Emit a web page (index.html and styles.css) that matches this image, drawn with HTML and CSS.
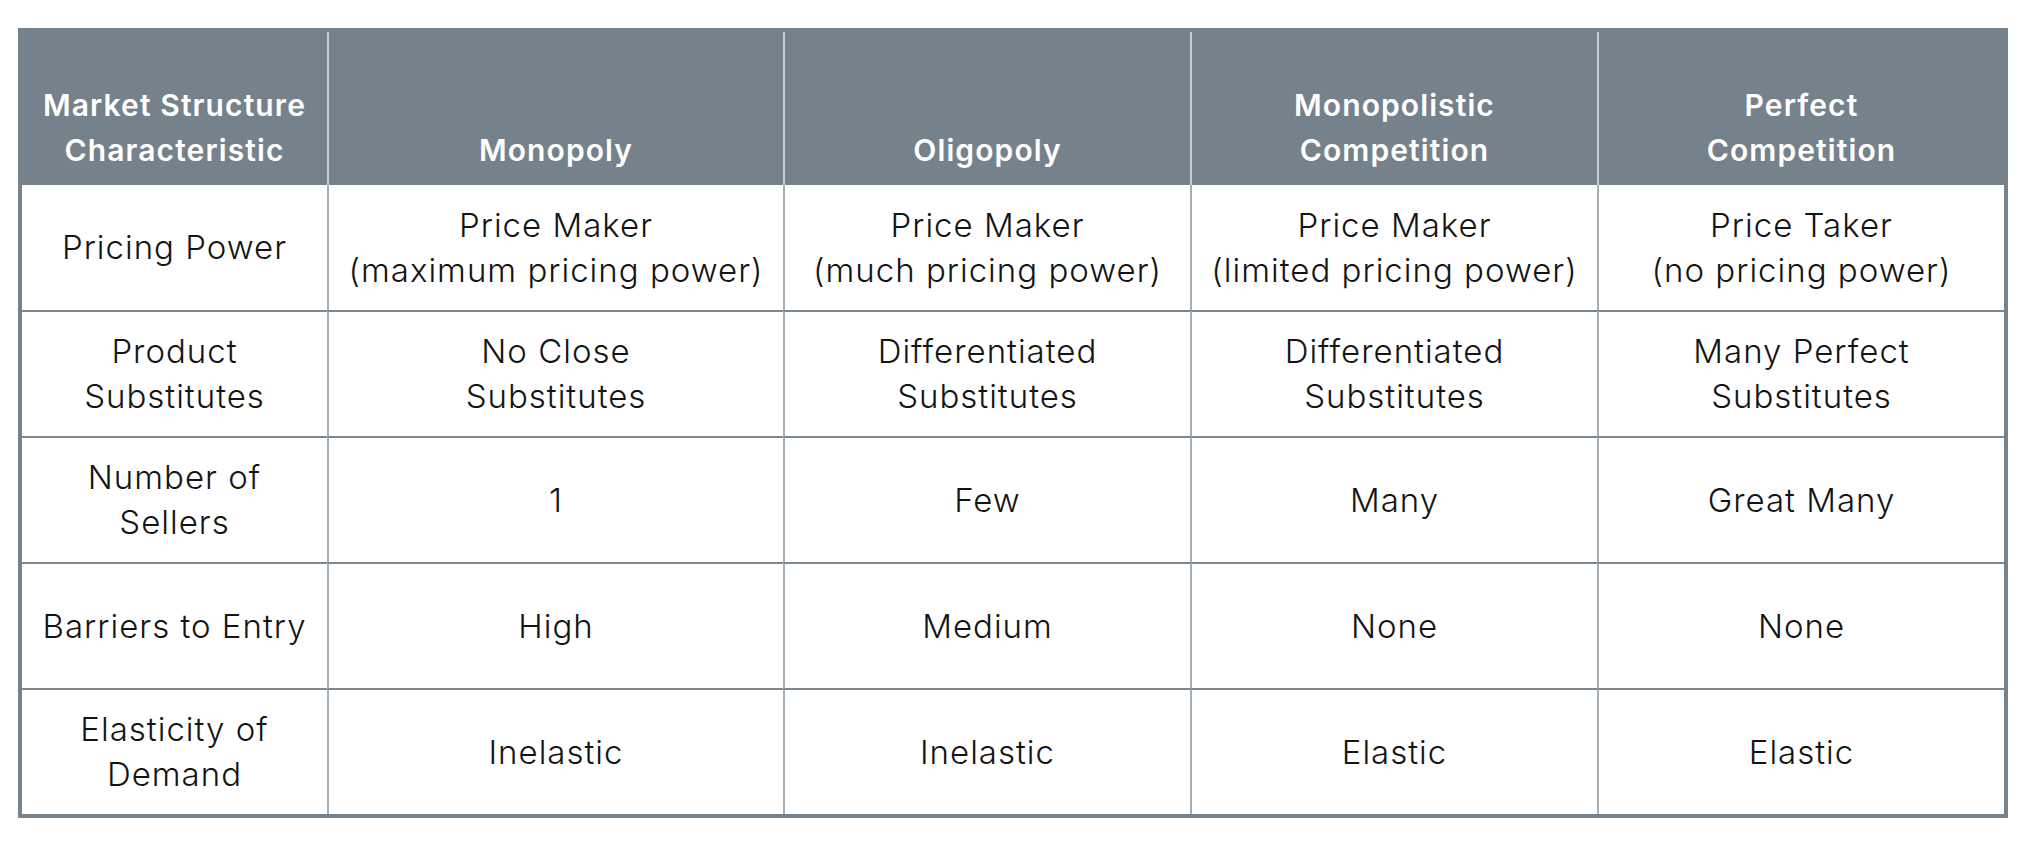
FILE: index.html
```html
<!DOCTYPE html>
<html>
<head>
<meta charset="utf-8">
<link rel="stylesheet" href="styles.css">
</head>
<body>
<table class="market">
  <thead>
    <tr class="head-row">
      <th class="c1">Market Structure<br>Characteristic</th>
      <th class="cx">Monopoly</th>
      <th class="cx">Oligopoly</th>
      <th class="cx">Monopolistic<br>Competition</th>
      <th class="cx">Perfect<br>Competition</th>
    </tr>
  </thead>
  <tbody>
    <tr class="row first">
      <td class="c1">Pricing Power</td>
      <td class="cx">Price Maker<br>(maximum pricing power)</td>
      <td class="cx">Price Maker<br>(much pricing power)</td>
      <td class="cx">Price Maker<br>(limited pricing power)</td>
      <td class="cx">Price Taker<br>(no pricing power)</td>
    </tr>
    <tr class="row">
      <td class="c1">Product<br>Substitutes</td>
      <td class="cx">No Close<br>Substitutes</td>
      <td class="cx">Differentiated<br>Substitutes</td>
      <td class="cx">Differentiated<br>Substitutes</td>
      <td class="cx">Many Perfect<br>Substitutes</td>
    </tr>
    <tr class="row">
      <td class="c1">Number of<br>Sellers</td>
      <td class="cx">1</td>
      <td class="cx">Few</td>
      <td class="cx">Many</td>
      <td class="cx">Great Many</td>
    </tr>
    <tr class="row">
      <td class="c1">Barriers to Entry</td>
      <td class="cx">High</td>
      <td class="cx">Medium</td>
      <td class="cx">None</td>
      <td class="cx">None</td>
    </tr>
    <tr class="row">
      <td class="c1">Elasticity of<br>Demand</td>
      <td class="cx">Inelastic</td>
      <td class="cx">Inelastic</td>
      <td class="cx">Elastic</td>
      <td class="cx">Elastic</td>
    </tr>
  </tbody>
</table>
</body>
</html>
```

FILE: styles.css
```css
html, body {
  margin: 0;
  padding: 0;
  background: #ffffff;
}

.market {
  box-sizing: border-box;
  margin: 28px 0 0 18px;
  width: 1990px;
  table-layout: fixed;
  border-collapse: separate;
  border-spacing: 0;
  border: 4px solid #76828b;
  font-family: "Inter", "Liberation Sans", sans-serif;
}

.market th,
.market td {
  box-sizing: border-box;
  padding: 0;
  text-align: center;
}

.market .c1 { width: 305px; }
.market th.cx:nth-child(2),
.market td.cx:nth-child(2) { width: 456px; }
.market th.cx:nth-child(n+3),
.market td.cx:nth-child(n+3) { width: 407px; }

.head-row th {
  height: 153px;
  background: #76828b;
  color: #ffffff;
  font-weight: 600;
  font-size: 30px;
  letter-spacing: 1.1px;
  line-height: 45px;
  vertical-align: bottom;
  padding-bottom: 12px;
}

.head-row th.cx {
  border-left: 2px solid #c6ccd0;
}

.row td {
  height: 126px;
  border-top: 2px solid #7c8790;
  color: #141414;
  font-weight: 300;
  font-size: 33px;
  letter-spacing: 1px;
  line-height: 45px;
  vertical-align: middle;
}

.row.first td {
  height: 125px;
  border-top: 0;
}

.row td.cx {
  border-left: 2px solid #a6aeb4;
}
```
